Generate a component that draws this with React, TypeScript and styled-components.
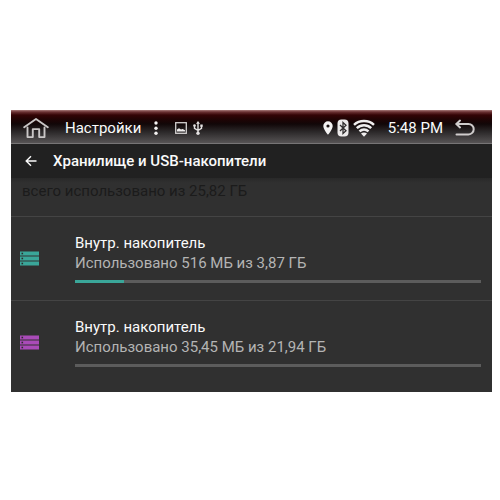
import React from "react";
import styled, { createGlobalStyle } from "styled-components";

const GlobalStyle = createGlobalStyle`
  * { box-sizing: border-box; }
  body {
    margin: 0;
    background: #ffffff;
    font-family: Roboto, "Noto Sans", sans-serif;
  }
`;

const Page = styled.main`
  padding: 110px 8px 108px 11px;
`;

const Screen = styled.div`
  background: #303030;
  color: #fafafa;
  overflow: hidden;
`;

const StatusBar = styled.header`
  display: flex;
  align-items: center;
  height: 34px;
  padding: 2px 17px 0 12px;
  border-bottom: 1px solid #777576;
  background: linear-gradient(
    #a87a7a 0,
    #6a3032 2px,
    #330305 5px,
    #200304 9px,
    #110708 14px,
    #2c292a 22px,
    #575455 33px
  );
`;

const IconButton = styled.button`
  display: flex;
  flex: none;
  padding: 0;
  border: 0;
  background: none;
  color: inherit;
  cursor: pointer;
`;

const AppName = styled.span`
  margin-left: 16px;
  font-size: 15px;
  line-height: 20px;
  white-space: nowrap;
`;

const MenuButton = styled(IconButton)`
  margin: 0 17px 0 13px;
`;

const Notices = styled.div`
  display: flex;
  align-items: center;
  gap: 6px;
`;

const Signals = styled.div`
  display: flex;
  align-items: center;
  gap: 4px;
  margin-left: auto;
`;

const Clock = styled.time`
  margin: 0 12px 0 13px;
  font-size: 15px;
  line-height: 20px;
  white-space: nowrap;
`;

const TitleBar = styled.div`
  display: flex;
  align-items: center;
  gap: 16px;
  height: 34px;
  padding: 0 14px;
  background: #212121;
`;

const Title = styled.h1`
  margin: 0;
  font-size: 15px;
  line-height: 20px;
  font-weight: 500;
  white-space: nowrap;
`;

const Summary = styled.p`
  height: 38px;
  margin: 0;
  padding: 3px 11px;
  background: linear-gradient(#292929, #303030 5px);
  color: #1b1b1b;
  font-size: 15px;
  line-height: 20px;
`;

const VolumeList = styled.ul`
  margin: 0;
  padding: 0;
  list-style: none;
`;

const Volume = styled.li`
  display: grid;
  grid-template-columns: 56px 1fr;
  align-items: center;
  padding: 16px 11px 16px 8px;
  border-top: 1px solid #444444;

  &:last-child { padding-bottom: 24px; }
`;

const VolumeIcon = styled.span<{ $color: string }>`
  display: flex;
  color: ${(p) => p.$color};
`;

const VolumeName = styled.h2`
  margin: 0;
  font-size: 15px;
  line-height: 20px;
  font-weight: 400;
`;

const Usage = styled.label`
  display: block;
  color: #b4b4b4;
  font-size: 15px;
  line-height: 20px;
`;

const UsageBar = styled.progress<{ $color: string }>`
  display: block;
  width: 100%;
  height: 3px;
  margin-top: 7px;
  margin-bottom: 1px;
  border: 0;
  appearance: none;
  background: #5c5c5c;

  &::-webkit-progress-bar { background: #5c5c5c; }
  &::-webkit-progress-value { background: ${(p) => p.$color}; }
`;

const HomeIcon = () => (
  <svg width="26" height="22" viewBox="0 0 26 22" fill="none" stroke="#c9c6c6" strokeWidth="1.9" strokeLinejoin="round" strokeLinecap="round">
    <path d="M1.2 10.2 13 2l11.8 8.2" />
    <path d="M4.5 10.5v9.600h5.300v-8h6.400v8h5.300v-9.600" />
  </svg>
);

const DotsIcon = () => (
  <svg width="4" height="14" viewBox="0 0 4 14" fill="#f4f2f2">
    <circle cx="2" cy="2" r="1.7" />
    <circle cx="2" cy="7.2" r="1.7" />
    <circle cx="2" cy="12.3" r="1.7" />
  </svg>
);

const PictureIcon = () => (
  <svg width="12" height="12" viewBox="0 0 12 12">
    <rect x="0.7" y="0.7" width="10.6" height="10.6" fill="none" stroke="#d2cfcf" strokeWidth="1.3" />
    <path d="M2 9.5V7.600L4 6.200l2 1.400L7.600 7 10 8.300v1.200z" fill="#f0eeee" />
  </svg>
);

const UsbIcon = () => (
  <svg width="10" height="14" viewBox="0 0 10 14" fill="none" stroke="#e4e1e1" strokeWidth="1.4">
    <path d="M5 2v10M1.500 4.500v2.800L5 9.500l3.500-2.200V4.500" />
    <g fill="#e4e1e1" stroke="none">
      <path d="M5 0 7 2.800H3z" />
      <circle cx="1.5" cy="4.6" r="1.3" />
      <path d="M7.300 3.500h2.400v2.300H7.300z" />
      <circle cx="5" cy="12.3" r="1.7" />
    </g>
  </svg>
);

const PinIcon = () => (
  <svg width="10" height="14" viewBox="0 0 10 14" fill="#f4f2f2">
    <path fillRule="evenodd" d="M5 .3A4.700 4.700 0 0 0 .3 5c0 3.300 4.700 8.800 4.700 8.800S9.700 8.300 9.700 5A4.700 4.700 0 0 0 5 .3zM5 3.400a1.600 1.600 0 1 1 0 3.200 1.600 1.600 0 0 1 0-3.200z" />
  </svg>
);

const BluetoothIcon = () => (
  <svg width="12" height="18" viewBox="0 0 12 18">
    <rect x="0.5" y="0.5" width="11" height="17" rx="4" fill="#eceaea" />
    <path d="M3 6 9 11.700 6 14.500V3.500L9 6.300 3 12" fill="none" stroke="#302d2e" strokeWidth="1.3" />
  </svg>
);

const WifiIcon = () => (
  <svg width="22" height="18" viewBox="0 0 22 18" fill="none" stroke="#f0eeee" strokeWidth="2.5">
    <path d="M1 5.800C6.500.7 15.500.7 21 5.800" />
    <path d="M3.800 9.200C8 5.300 14 5.300 18.200 9.200" />
    <path d="M6.500 12.400c2.700-2.500 6.300-2.500 9 0" />
    <path d="M8 14.600c1.800-1.500 4.200-1.500 6 0L11 17.800z" fill="#f0eeee" stroke="none" />
  </svg>
);

const ReturnIcon = () => (
  <svg width="20" height="18" viewBox="0 0 20 18" fill="none" stroke="#cfcccc" strokeWidth="2" strokeLinejoin="round" strokeLinecap="round">
    <path d="M5 1.600 1.400 5 5 8.400" />
    <path d="M1.600 5H13.500a5.200 5.200 0 0 1 0 10.400H1.500" />
  </svg>
);

const ArrowIcon = () => (
  <svg width="12" height="12" viewBox="0 0 12 12" fill="none" stroke="#fafafa" strokeWidth="1.4">
    <path d="M11.500 6H1.500M6 1.200 1.200 6 6 10.800" />
  </svg>
);

const StorageIcon = () => (
  <svg width="21" height="15" viewBox="0 0 21 15">
    {[0, 5, 10].map((y) => (
      <g key={y}>
        <rect x="1" y={y + 0.5} width="19" height="4" fill="currentColor" />
        <rect x="2.5" y={y + 1.7} width="1.6" height="1.6" fill="#2b2b2b" />
      </g>
    ))}
  </svg>
);

const volumes = [
  { id: "internal-1", name: "Внутр. накопитель", usage: "Использовано 516 МБ из 3,87 ГБ", percent: 12, color: "#3aa699" },
  { id: "internal-2", name: "Внутр. накопитель", usage: "Использовано 35,45 МБ из 21,94 ГБ", percent: 0, color: "#a94bb8" },
];

export default function App() {
  return (
    <Page>
      <GlobalStyle />
      <Screen>
        <StatusBar>
          <IconButton aria-label="Домой"><HomeIcon /></IconButton>
          <AppName>Настройки</AppName>
          <MenuButton aria-label="Меню"><DotsIcon /></MenuButton>
          <Notices>
            <PictureIcon />
            <UsbIcon />
          </Notices>
          <Signals>
            <PinIcon />
            <BluetoothIcon />
            <WifiIcon />
          </Signals>
          <Clock>5:48 PM</Clock>
          <IconButton aria-label="Возврат"><ReturnIcon /></IconButton>
        </StatusBar>
        <TitleBar>
          <IconButton aria-label="Назад"><ArrowIcon /></IconButton>
          <Title>Хранилище и USB-накопители</Title>
        </TitleBar>
        <Summary>всего использовано из 25,82 ГБ</Summary>
        <VolumeList>
          {volumes.map((v) => (
            <Volume key={v.id}>
              <VolumeIcon $color={v.color}><StorageIcon /></VolumeIcon>
              <div>
                <VolumeName>{v.name}</VolumeName>
                <Usage htmlFor={v.id}>{v.usage}</Usage>
                <UsageBar id={v.id} value={v.percent} max={100} $color={v.color} />
              </div>
            </Volume>
          ))}
        </VolumeList>
      </Screen>
    </Page>
  );
}
